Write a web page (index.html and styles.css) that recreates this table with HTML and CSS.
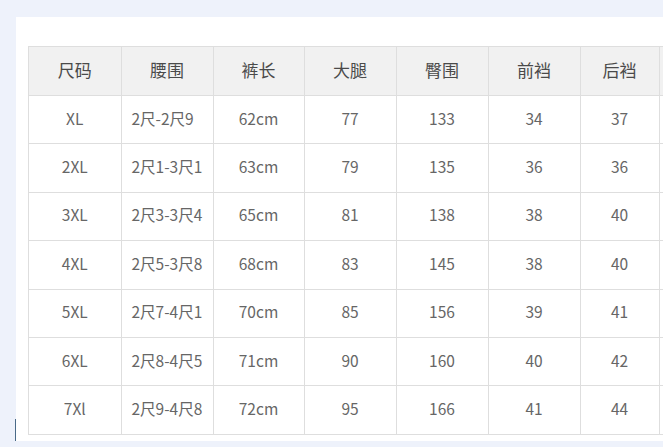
FILE: index.html
```html
<!DOCTYPE html>
<html lang="zh-CN">
<head>
<meta charset="utf-8">
<title>尺码表</title>
<link rel="stylesheet" href="styles.css">
</head>
<body>
<div class="page">
  <span class="caret"></span>
  <div class="card">
    <table class="size-table">
      <colgroup>
        <col class="c1"><col class="c2"><col class="c3"><col class="c4"><col class="c5"><col class="c6"><col class="c7"><col class="c8">
      </colgroup>
      <thead>
        <tr><th>尺码</th><th>腰围</th><th>裤长</th><th>大腿</th><th>臀围</th><th>前裆</th><th>后裆</th><th></th></tr>
      </thead>
      <tbody>
        <tr><td>XL</td><td class="left">2尺-2尺9</td><td>62cm</td><td>77</td><td>133</td><td>34</td><td>37</td><td></td></tr>
        <tr><td>2XL</td><td class="left">2尺1-3尺1</td><td>63cm</td><td>79</td><td>135</td><td>36</td><td>36</td><td></td></tr>
        <tr><td>3XL</td><td class="left">2尺3-3尺4</td><td>65cm</td><td>81</td><td>138</td><td>38</td><td>40</td><td></td></tr>
        <tr><td>4XL</td><td class="left">2尺5-3尺8</td><td>68cm</td><td>83</td><td>145</td><td>38</td><td>40</td><td></td></tr>
        <tr><td>5XL</td><td class="left">2尺7-4尺1</td><td>70cm</td><td>85</td><td>156</td><td>39</td><td>41</td><td></td></tr>
        <tr><td>6XL</td><td class="left">2尺8-4尺5</td><td>71cm</td><td>90</td><td>160</td><td>40</td><td>42</td><td></td></tr>
        <tr><td>7Xl</td><td class="left">2尺9-4尺8</td><td>72cm</td><td>95</td><td>166</td><td>41</td><td>44</td><td></td></tr>
      </tbody>
    </table>
  </div>
</div>
</body>
</html>
```
FILE: styles.css
```css
html, body {
  margin: 0;
  padding: 0;
  background: #eef2fb;
  overflow: hidden;
}
.page {
  position: relative;
  width: 663px;
  height: 447px;
  padding: 17px 0 0 16px;
  box-sizing: border-box;
  overflow: hidden;
}
.caret {
  position: absolute;
  left: 15px;
  top: 419px;
  width: 1px;
  height: 22px;
  background: #4a6a88;
}
.card {
  width: 700px;
  height: 424px;
  background: #ffffff;
  padding: 29px 0 0 12px;
  box-sizing: border-box;
  overflow: hidden;
}
.size-table {
  border-collapse: collapse;
  table-layout: fixed;
  width: 731px;
  font-family: "Noto Sans CJK SC", "Noto Sans", sans-serif;
  color: #555555;
}
.c1 { width: 92.5px; }
.c2 { width: 92px; }
.c3 { width: 91px; }
.c4 { width: 92px; }
.c5 { width: 92px; }
.c6 { width: 92px; }
.c7 { width: 79px; }
.c8 { width: 100px; }
.size-table th,
.size-table td {
  border: 1px solid #dedede;
  text-align: center;
  padding: 0 0 4px 0;
  white-space: nowrap;
  overflow: hidden;
}
.size-table th {
  background: #f1f1f1;
  font-weight: normal;
  font-size: 17px;
  color: #4a4a4a;
  height: 44px;
}
.size-table td {
  font-size: 15.5px;
  height: 43.4px;
  color: #666666;
}
.size-table td.left {
  text-align: left;
  padding-left: 10px;
}
```
